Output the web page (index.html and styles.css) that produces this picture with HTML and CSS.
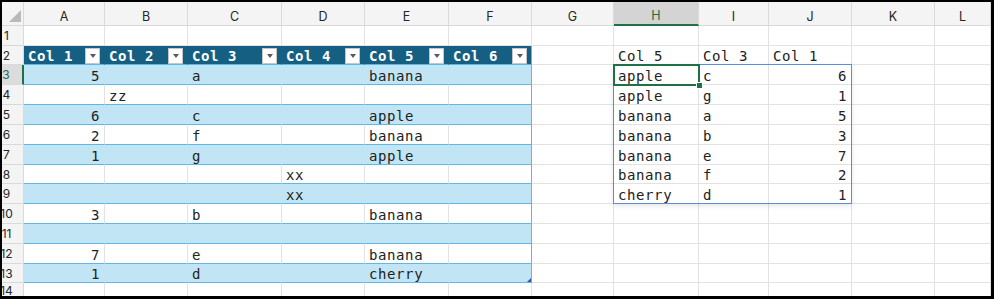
FILE: index.html
```html
<!DOCTYPE html>
<html lang="en">
<head>
  <meta charset="UTF-8" />
  <meta name="viewport" content="width=device-width, initial-scale=1.0"/>
  <title>Book1 - Sheet1</title>
  <link rel="stylesheet" href="styles.css">
</head>
<body>

  <div class="frame">
    <div class="sheet" id="sheet"></div>
  </div>

  <script>
    const sheet = document.getElementById("sheet");
    const cols = ["A", "B", "C", "D", "E", "F", "G", "H", "I", "J", "K", "L"];
    const activeCol = "H";
    const activeRow = 3;

    // Table1 sits in A2:F13, the sorted spill in H2:J9
    const rows = {
      2:  { H: "Col 5", I: "Col 3", J: "Col 1" },
      3:  { A: 5, C: "a", E: "banana", H: "apple", I: "c", J: 6 },
      4:  { B: "zz", H: "apple", I: "g", J: 1 },
      5:  { A: 6, C: "c", E: "apple", H: "banana", I: "a", J: 5 },
      6:  { A: 2, C: "f", E: "banana", H: "banana", I: "b", J: 3 },
      7:  { A: 1, C: "g", E: "apple", H: "banana", I: "e", J: 7 },
      8:  { D: "xx", H: "banana", I: "f", J: 2 },
      9:  { D: "xx", H: "cherry", I: "d", J: 1 },
      10: { A: 3, C: "b", E: "banana" },
      12: { A: 7, C: "e", E: "banana" },
      13: { A: 1, C: "d", E: "cherry" }
    };

    function add(parent, cls, text) {
      const d = document.createElement("div");
      d.className = cls;
      if (text !== undefined) d.textContent = text;
      parent.appendChild(d);
      return d;
    }

    add(sheet, "corner");
    cols.forEach(c => add(sheet, "colhead" + (c === activeCol ? " sel" : ""), c));

    for (let r = 1; r <= 14; r++) {
      add(sheet, "rowhead" + (r === activeRow ? " sel" : ""), r);

      cols.forEach((c, i) => {
        const v = rows[r] ? rows[r][c] : undefined;
        const inTable = i < 6 && r >= 2 && r <= 13;
        let cls = "cell";
        if (typeof v === "number") cls += " num";
        if (inTable) {
          cls += " tbl";
          if (r === 2) cls += " head";
          else if (r % 2 === 1) cls += " band";
          if (i === 5) cls += " edge";
          if (i === 5 && r === 13) cls += " grip";
        }
        const isActive = c === activeCol && r === activeRow;
        if (isActive) cls += " anchor";

        const cell = add(sheet, cls, inTable && r === 2 ? undefined : v);
        if (inTable && r === 2) {
          cell.innerHTML = `<span>Col ${i + 1}</span><i class="filter"></i>`;
        }
        if (isActive) {
          // spill range border (H3:J9) and the active cell outline
          add(cell, "spill");
          add(add(cell, "active"), "handle");
        }
      });
    }
  </script>

</body>
</html>
```

FILE: styles.css
```css
body {
  margin: 0;
  background: #fff;
}
.frame {
  width: 994px;
  height: 299px;
  box-sizing: border-box;
  border: 2px solid #000;
  border-right-width: 3px;
  border-bottom-width: 3px;
  overflow: hidden;
}
.sheet {
  display: grid;
  grid-template-columns: 22px 81px 83px 94px 83px 84px 83px 82px 85px 70px 83px 83px 1fr;
  grid-template-rows: 24px 20px 19px 20px 20px 20px 20px 20px 19px 20px 20px 20px 20px 19px 1fr;
  height: 100%;
  font-family: "DejaVu Sans Mono", monospace;
  font-size: 14px;
  letter-spacing: 0.6px;
  color: #222;
}
.sheet > div {
  box-sizing: border-box;
  min-width: 0;
}

/* headers */
.corner,
.colhead,
.rowhead {
  background: #f4f4f4;
  border-right: 1px solid #d9d9d9;
  border-bottom: 1px solid #d9d9d9;
  font-family: "Inter", "Liberation Sans", sans-serif;
  letter-spacing: 0;
  color: #262626;
  display: flex;
}
.corner {
  position: relative;
}
.corner::after {
  content: "";
  position: absolute;
  right: 2px;
  bottom: 3px;
  border-left: 12px solid transparent;
  border-bottom: 12px solid #b9b9b9;
}
.colhead {
  font-size: 12.5px;
  line-height: 16px;
  justify-content: center;
  align-items: flex-end;
}
.colhead.sel {
  background: #d4d4d4;
  color: #1e6b3e;
  border-bottom: 2px solid #1e7145;
}
.rowhead {
  font-size: 12px;
  justify-content: center;
  align-items: center;
  padding-right: 12px;
}
.rowhead.sel {
  background: #dcdcdc;
  color: #1e6b3e;
  border-right: 2px solid #1e7145;
}

/* cells */
.cell {
  display: flex;
  align-items: flex-end;
  padding: 0 4px;
  line-height: 16px;
  white-space: nowrap;
  border-right: 1px solid #e2e2e2;
  border-bottom: 1px solid #e2e2e2;
}
.cell.num {
  justify-content: flex-end;
}

/* Table1 style */
.cell.tbl {
  border-bottom-color: #61b6e4;
}
.cell.band {
  background: #c1e5f5;
  border-right-color: #c1e5f5;
}
.cell.head {
  background: #156082;
  border-right-color: #156082;
  color: #fff;
  font-weight: bold;
}
.cell.edge {
  border-right-color: #61b6e4;
}
.cell.grip {
  position: relative;
}
.cell.grip::after {
  content: "";
  position: absolute;
  right: 0;
  bottom: 0;
  border-left: 4px solid transparent;
  border-bottom: 4px solid #2f58a8;
}
.filter {
  margin-left: auto;
  width: 15px;
  height: 16px;
  box-sizing: border-box;
  background: #fff;
  border: 1px solid #c6c6c6;
  display: flex;
  align-items: center;
  justify-content: center;
}
.filter::after {
  content: "";
  border-left: 3.5px solid transparent;
  border-right: 3.5px solid transparent;
  border-top: 4px solid #5a5a5a;
}

/* H3 carries the spill border and the active cell outline */
.cell.anchor {
  position: relative;
}
.spill,
.active {
  position: absolute;
  left: -1px;
  top: -1px;
  box-sizing: border-box;
  pointer-events: none;
}
.spill {
  width: 239px;
  height: 140px;
  border: 1px solid #5b8ddb;
  box-shadow: 0 2px 5px rgba(0, 0, 0, 0.1);
}
.active {
  width: 87px;
  height: 22px;
  border: 2px solid #1e7145;
}
.handle {
  position: absolute;
  right: -5px;
  bottom: -5px;
  width: 7px;
  height: 7px;
  box-sizing: border-box;
  background: #1e7145;
  border: 1px solid #fff;
}
```
